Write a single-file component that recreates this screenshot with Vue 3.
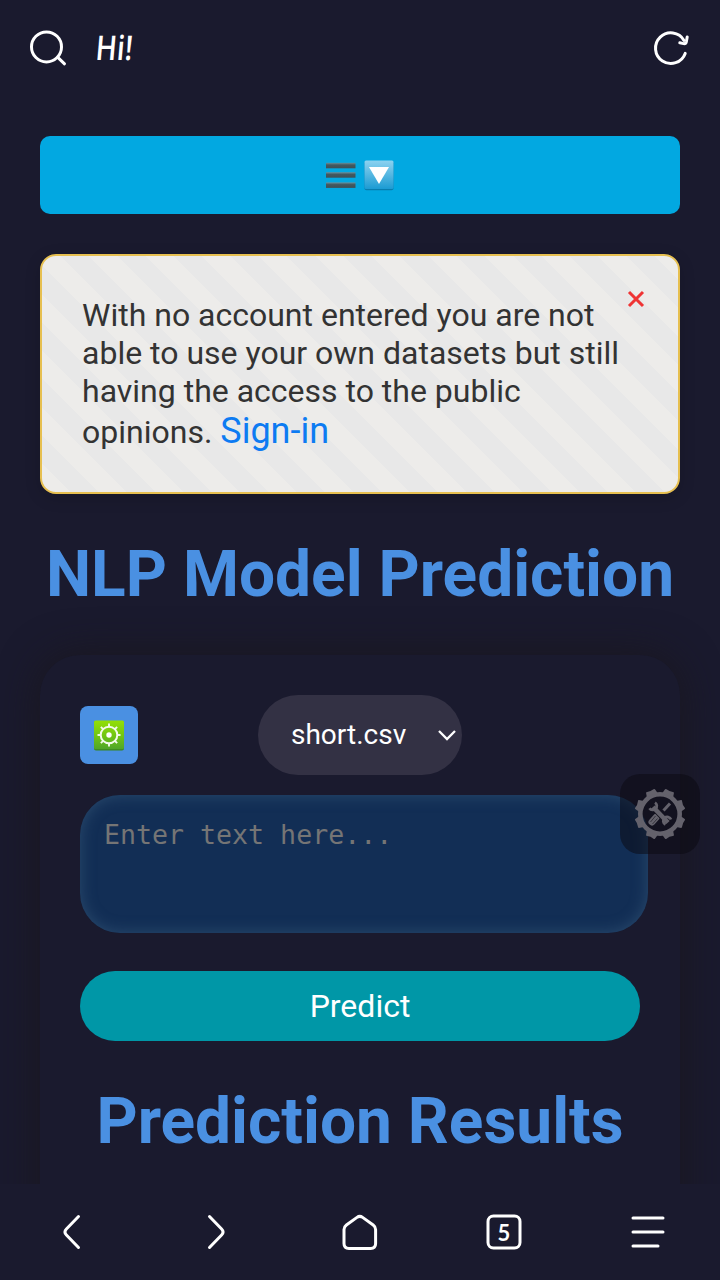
<script setup>
const rays = [0, 45, 90, 135, 180, 225, 270, 315]
const teeth = [22.5, 67.5, 112.5, 157.5, 202.5, 247.5, 292.5, 337.5]
</script>

<template>
  <div class="screen">
    <header class="topbar">
      <svg class="search" width="40" height="40" viewBox="0 0 40 40">
        <circle cx="18.5" cy="18.9" r="15" />
        <path d="M29.8 29.4 L36.5 35.8" />
      </svg>
      <span class="greeting">Hi!</span>
      <svg class="reload" width="40" height="40" viewBox="0 0 40 40">
        <path d="M35.2 25.4 A15.3 15.3 0 1 1 34 12.4" />
        <path d="M37.2 9 L36.4 13.6 Q35.8 16 33.6 15.6 L29.8 14.8" />
      </svg>
    </header>

    <main class="page">
      <button class="menu">
        <svg width="30" height="30" viewBox="0 0 30 30">
          <defs>
            <linearGradient id="bar" x1="0" y1="0" x2="0" y2="1">
              <stop offset="0" stop-color="#69909d" />
              <stop offset=".4" stop-color="#435960" />
              <stop offset="1" stop-color="#3d5058" />
            </linearGradient>
          </defs>
          <rect y="2.8" width="29.5" height="5.5" fill="url(#bar)" />
          <rect y="12.2" width="29.5" height="5.5" fill="url(#bar)" />
          <rect y="22.4" width="29.5" height="5.5" fill="url(#bar)" />
        </svg>
        <svg width="30" height="31" viewBox="0 0 30 31">
          <defs>
            <linearGradient id="down" x1="0" y1="0" x2="0" y2="1">
              <stop offset="0" stop-color="#8cd2f0" />
              <stop offset=".5" stop-color="#55b7e1" />
              <stop offset="1" stop-color="#1b9bd3" />
            </linearGradient>
          </defs>
          <rect x=".5" y="1.3" width="29" height="29" rx="2" fill="#087daf" />
          <rect x=".5" y=".5" width="29" height="28.5" rx="1.5" fill="url(#down)" />
          <path d="M5 7 H25 L15 24 Z" fill="#fff" />
        </svg>
      </button>

      <section class="notice">
        <p>With no account entered you are not able to use your own datasets but still having the access to the public opinions. <a>Sign-in</a></p>
        <svg class="close" width="18" height="18" viewBox="0 0 18 18">
          <path d="M2 2 L16 16 M16 2 L2 16" />
        </svg>
      </section>

      <h1>NLP Model Prediction</h1>

      <section class="card">
        <div class="tools">
          <button class="gear">
            <svg width="30" height="31" viewBox="0 0 30 31">
              <defs>
                <linearGradient id="green" x1="0" y1="0" x2="0" y2="1">
                  <stop offset="0" stop-color="#94df08" />
                  <stop offset=".5" stop-color="#73c712" />
                  <stop offset="1" stop-color="#4fa52a" />
                </linearGradient>
              </defs>
              <rect y="1" width="30" height="29.5" rx="2" fill="#39861e" />
              <rect y=".5" width="30" height="28.8" rx="1.5" fill="url(#green)" />
              <g stroke="#f4faed" fill="none">
                <circle cx="15" cy="15" r="8.3" stroke-width="2" />
                <path v-for="r in rays" :key="r" d="M15 7 V3.5" stroke-width="1.9" :transform="`rotate(${r} 15 15)`" />
              </g>
              <circle cx="15" cy="15" r="2.7" fill="#fff" />
            </svg>
          </button>
          <div class="select">
            <span>short.csv</span>
            <svg width="20" height="14" viewBox="0 0 20 14"><path d="M2 3 L10 11 L18 3" /></svg>
          </div>
        </div>
        <div class="entry">Enter text here...</div>
        <button class="predict">Predict</button>
        <h1>Prediction Results</h1>
      </section>
    </main>

    <div class="float">
      <svg width="52" height="52" viewBox="0 0 52 52">
        <circle cx="26" cy="26" r="19.7" fill="none" stroke="#64626c" stroke-width="4.6" />
        <path v-for="t in teeth" :key="t" d="M20.2 5.8 L21.2 1.2 Q21.6 .2 22.6 .7 Q26 1.8 29.4 .7 Q30.4 .2 30.8 1.2 L31.8 5.8 Z" fill="#64626c" :transform="`rotate(${t} 26 26)`" />
        <path d="M36 15.5 L29.5 22.5" stroke="#64626c" stroke-width="3" />
        <path d="M22 29.5 L18 34" stroke="#64626c" stroke-width="7" stroke-linecap="round" />
        <path d="M21.5 28 L16.5 34 M23.5 30.5 L18.5 36" stroke="#15141f" stroke-width=".6" />
        <path d="M19 19 L34 35" stroke="#15141f" stroke-width="6" />
        <path d="M19 19 L34 34.5" stroke="#64626c" stroke-width="4.6" />
        <path d="M21 14.6 A4 4 0 1 1 15.5 20.2 M31.5 36.5 A4 4 0 1 1 37 31.5" fill="none" stroke="#64626c" stroke-width="2.8" transform="rotate(0)" />
      </svg>
    </div>

    <nav class="bottombar">
      <svg width="40" height="40" viewBox="0 0 40 40"><path d="M26.5 4.5 L14.4 17 Q11.5 20 14.4 23 L26.5 35.5" /></svg>
      <svg width="40" height="40" viewBox="0 0 40 40"><path d="M13.5 4.5 L25.6 17 Q28.5 20 25.6 23 L13.5 35.5" /></svg>
      <svg width="40" height="40" viewBox="0 0 40 40"><path d="M17 5.4 Q19.8 3.4 22.6 5.4 L33.2 13 Q35.6 14.8 35.6 17.5 V31.5 Q35.6 36.4 30.7 36.4 H8.9 Q4 36.4 4 31.5 V17.5 Q4 14.8 6.4 13 Z" /></svg>
      <span class="tabs">
        <svg width="40" height="40" viewBox="0 0 40 40"><rect x="4" y="4" width="32" height="32" rx="5.5" /></svg>
        <b>5</b>
      </span>
      <svg width="40" height="40" viewBox="0 0 40 40"><path d="M5 6 H35 M5 20 H35 M5 34 H30" /></svg>
    </nav>
  </div>
</template>

<style>
body { background: #1a1a2e; }
</style>

<style scoped>
* { box-sizing: border-box; }
.screen {
  position: relative;
  display: flex;
  flex-direction: column;
  width: 720px;
  height: 1280px;
  overflow: hidden;
  background: #1a1a2e;
  font-family: Roboto, sans-serif;
}
button { border: 0; padding: 0; font-family: inherit; color: #fff; }
svg { display: block; flex: none; }
.topbar { display: flex; align-items: center; height: 96px; flex: none; padding: 0 30px 0 28px; }
.topbar svg, .bottombar svg { fill: none; stroke: #fff; stroke-width: 3; stroke-linecap: round; stroke-linejoin: round; }
.greeting {
  margin-left: 28px;
  margin-top: -2px;
  flex: 1;
  color: #fff;
  font: 600 34px/40px "Open Sans", sans-serif;
  transform: skewX(-5deg) scaleX(.83);
  transform-origin: left center;
}
.page { flex: 1; min-height: 0; overflow: hidden; padding: 40px 40px 0; }
.menu {
  display: flex;
  align-items: center;
  justify-content: center;
  gap: 8px;
  width: 100%;
  height: 78px;
  border-radius: 10px;
  background: #02a8e1;
}
.notice {
  position: relative;
  height: 240px;
  margin-top: 40px;
  padding: 40px;
  border: 2px solid #e6bf50;
  border-radius: 16px;
  background: repeating-linear-gradient(45deg, #edecea 0 20px, #e8e8e8 20px 40px);
  box-shadow: 0 4px 16px rgba(0, 0, 0, .15);
}
.notice p { margin: 0; width: 556px; font-size: 32px; line-height: 38px; color: #333; }
.notice a { font-size: 36px; line-height: 42px; color: #0d7bf2; }
.close { position: absolute; right: 33px; top: 34px; stroke: #ef3434; stroke-width: 3; }
h1 {
  margin: 0;
  text-align: center;
  white-space: nowrap;
  font-size: 64px;
  line-height: 76px;
  font-weight: 700;
  color: #4a90e2;
}
.notice + h1 { margin-top: 43px; }
.card {
  height: 700px;
  margin-top: 42px;
  padding: 40px;
  border-radius: 40px;
  background: #1a1a2e;
  box-shadow: 0 0 40px rgba(26, 22, 26, .8);
}
.tools { display: grid; grid-template-columns: 1fr auto 1fr; align-items: center; height: 80px; }
.gear { display: grid; place-items: center; width: 58px; height: 58px; border-radius: 8px; background: #4a90e2; }
.select {
  display: flex;
  align-items: center;
  justify-content: space-between;
  width: 204px;
  height: 80px;
  padding: 0 5px 0 33px;
  border-radius: 40px;
  background: #333144;
  color: #fff;
  font-size: 28px;
}
.select span { padding-bottom: 2px; }
.select svg { fill: none; stroke: #fff; stroke-width: 2.3; }
.entry {
  width: 568px;
  height: 138px;
  margin-top: 20px;
  padding: 24px;
  border-radius: 40px;
  background: #122e55;
  box-shadow: inset 0 0 16px rgba(74, 110, 140, .45);
  color: #757575;
  font: 26.6px/31px "DejaVu Sans Mono", monospace;
}
.predict {
  display: block;
  width: 100%;
  height: 70px;
  margin-top: 38px;
  border-radius: 35px;
  background: #0097a7;
  font-size: 32px;
}
.predict + h1 { margin-top: 43px; }
.float {
  position: absolute;
  left: 620px;
  top: 774px;
  display: grid;
  place-items: center;
  width: 80px;
  height: 80px;
  border-radius: 20px;
  background: rgba(10, 8, 16, .5);
}
.bottombar { display: flex; align-items: center; justify-content: space-around; height: 96px; flex: none; background: #1a1a2e; }
.tabs { position: relative; }
.tabs b { position: absolute; inset: 0; text-align: center; color: #fff; font: 700 22px/41px Lato, sans-serif; }
</style>
